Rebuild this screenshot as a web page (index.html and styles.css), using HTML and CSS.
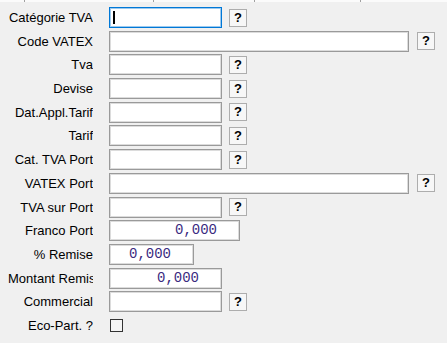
FILE: index.html
```html
<!DOCTYPE html>
<html lang="fr">
<head>
  <meta charset="UTF-8">
  <title>Fiche TVA</title>
  <link rel="stylesheet" href="styles.css">
</head>
<body>
<div class="rule"></div>
<div class="form">
  <label class="lbl">Catégorie TVA</label>
  <div class="field"><div class="box short focus"><span class="caret"></span></div><span class="help">?</span></div>

  <label class="lbl">Code VATEX</label>
  <div class="field"><div class="box long"></div><span class="help">?</span></div>

  <label class="lbl">Tva</label>
  <div class="field"><div class="box short"></div><span class="help">?</span></div>

  <label class="lbl">Devise</label>
  <div class="field"><div class="box short"></div><span class="help">?</span></div>

  <label class="lbl">Dat.Appl.Tarif</label>
  <div class="field"><div class="box short"></div><span class="help">?</span></div>

  <label class="lbl">Tarif</label>
  <div class="field"><div class="box short"></div><span class="help">?</span></div>

  <label class="lbl">Cat. TVA Port</label>
  <div class="field"><div class="box short"></div><span class="help">?</span></div>

  <label class="lbl">VATEX Port</label>
  <div class="field"><div class="box long"></div><span class="help">?</span></div>

  <label class="lbl">TVA sur Port</label>
  <div class="field"><div class="box short"></div><span class="help">?</span></div>

  <label class="lbl">Franco Port</label>
  <div class="field"><div class="box num franco">0,000</div></div>

  <label class="lbl">% Remise</label>
  <div class="field"><div class="box num remise">0,000</div></div>

  <label class="lbl">Montant Remise</label>
  <div class="field"><div class="box num short">0,000</div></div>

  <label class="lbl">Commercial</label>
  <div class="field"><div class="box short"></div><span class="help">?</span></div>

  <label class="lbl">Eco-Part. ?</label>
  <div class="field"><span class="check"></span></div>
</div>
</body>
</html>
```

FILE: styles.css
```css
body {
  margin: 0;
  background: #f0f0f0;
  font-family: "Liberation Sans", Arial, sans-serif;
  font-size: 13px;
  color: #000;
}

.rule {
  height: 2px;
  background:
    linear-gradient(#a0a0a0, #a0a0a0) 24px 0 / 1px 2px no-repeat,
    linear-gradient(#a0a0a0, #a0a0a0) 153px 0 / 1px 2px no-repeat,
    linear-gradient(#a0a0a0, #a0a0a0) 254px 0 / 1px 2px no-repeat,
    linear-gradient(#a0a0a0, #a0a0a0) 360px 0 / 1px 2px no-repeat,
    #fbfbfb;
}

.form {
  display: grid;
  grid-template-columns: 85px auto;
  grid-auto-rows: 21px;
  column-gap: 16px;
  row-gap: 2.7px;
  padding: 5px 0 0 8px;
  align-items: center;
}

.lbl {
  text-align: right;
  white-space: nowrap;
  overflow: hidden;
  line-height: 21px;
}

.field {
  display: flex;
  align-items: center;
  gap: 7px;
  height: 21px;
}

.box {
  height: 21px;
  box-sizing: border-box;
  background: #fff;
  border: 1px solid #9a9a9a;
  box-shadow: inset 0 0 0 1px #dcdcdc;
  position: relative;
}

.short { width: 113px; }
.long { width: 300px; }
.franco { width: 131px; }
.remise { width: 85px; }

.box.focus {
  border-color: #0078d7;
  box-shadow: inset 0 0 0 1px #9cc9ee;
}

.caret {
  position: absolute;
  left: 3px;
  top: 3px;
  width: 2px;
  height: 13px;
  background: #000;
}

.num {
  font-family: "Liberation Mono", "Courier New", monospace;
  font-size: 14px;
  color: #3a2a80;
  text-align: right;
  padding-right: 22px;
  line-height: 19px;
}

.help {
  width: 18px;
  height: 18px;
  box-sizing: border-box;
  border: 1px solid #adadad;
  background: #f7f7f7;
  font-weight: bold;
  font-size: 13px;
  line-height: 16px;
  text-align: center;
}

.long + .help { margin-left: 1px; }

.check {
  width: 13px;
  height: 13px;
  box-sizing: border-box;
  border: 1px solid #333;
  background: #f4f4f4;
  margin-left: 1px;
}
```
